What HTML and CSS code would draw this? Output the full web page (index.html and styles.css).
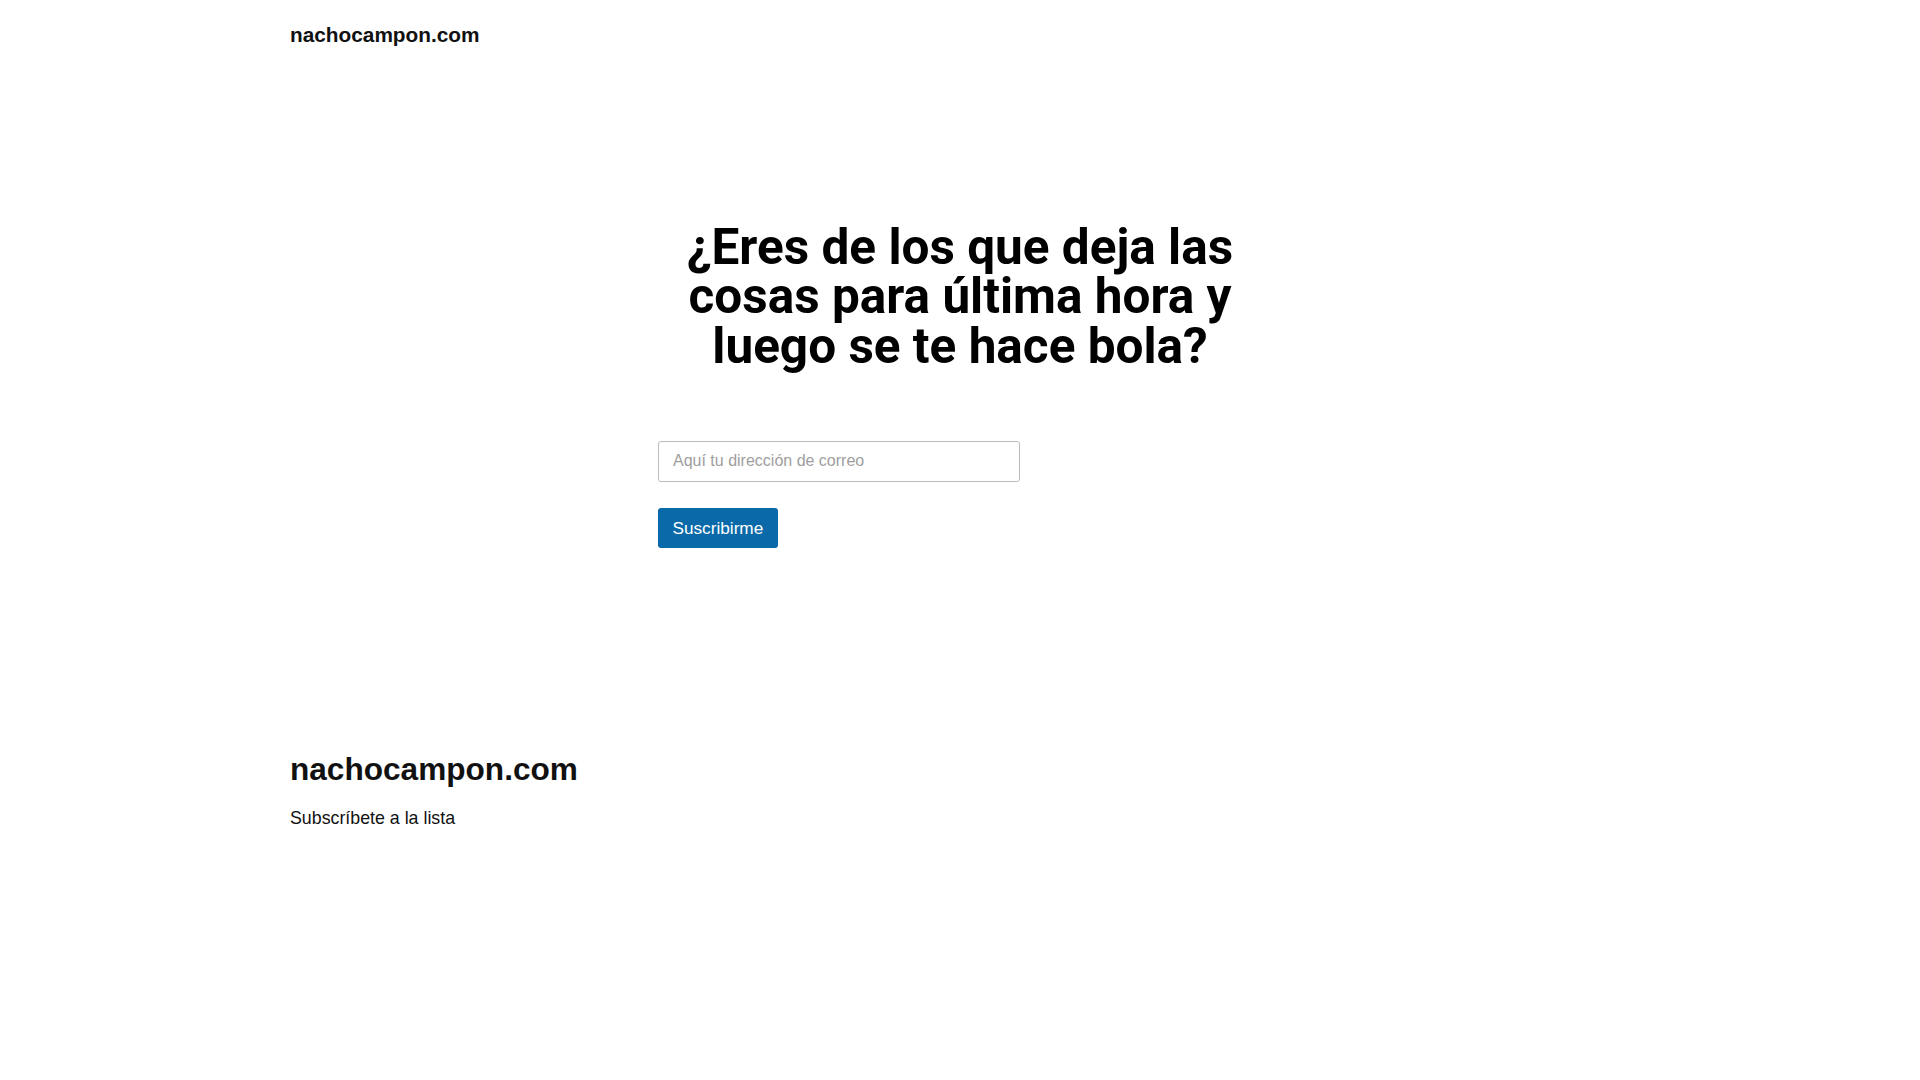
FILE: index.html
```html
<!DOCTYPE html>
<html lang="es">
<head>
<meta charset="utf-8">
<title>nachocampon.com</title>
<link rel="stylesheet" href="styles.css">
</head>
<body>
<header class="site-header">
  <div class="wide">
    <a class="site-title" href="#">nachocampon.com</a>
  </div>
</header>
<main class="site-main">
  <div class="content">
    <h1 class="headline">¿Eres de los que deja las cosas para última hora y luego se te hace bola?</h1>
    <form class="subscribe">
      <input class="email" type="email" placeholder="Aquí tu dirección de correo">
      <button class="submit" type="button">Suscribirme</button>
    </form>
  </div>
</main>
<footer class="site-footer">
  <div class="wide">
    <div class="footer-title">nachocampon.com</div>
    <p class="footer-tagline">Subscríbete a la lista</p>
  </div>
</footer>
</body>
</html>
```

FILE: styles.css
```css
html, body {
  margin: 0;
  padding: 0;
  background: #ffffff;
}

body {
  font-family: "Liberation Sans", Arial, sans-serif;
  color: #111111;
}

.wide {
  width: 1340px;
  margin: 0 auto;
}

.site-header {
  padding-top: 21px;
}

.site-title {
  display: block;
  font-size: 20.8px;
  font-weight: 700;
  line-height: 27px;
  color: #111111;
  text-decoration: none;
}

.site-main {
  padding-top: 174.5px;
}

.content {
  width: 604px;
  margin: 0 auto;
}

.headline {
  margin: 0;
  font-family: Roboto, "Liberation Sans", sans-serif;
  font-weight: 700;
  font-size: 49.5px;
  line-height: 49.5px;
  text-align: center;
  color: #000000;
}

.subscribe {
  margin: 69.5px 0 0;
  display: flex;
  flex-direction: column;
  align-items: flex-start;
  gap: 26px;
}

.email {
  box-sizing: border-box;
  width: 60%;
  height: 41px;
  margin: 0;
  padding: 0 14px;
  border: 1px solid #bcbcbc;
  border-radius: 3px;
  font-family: "Liberation Sans", Arial, sans-serif;
  font-size: 16px;
  color: #222222;
  background: #ffffff;
  outline: none;
}

.email::placeholder {
  color: #9e9e9e;
}

.submit {
  box-sizing: border-box;
  height: 40px;
  margin: 0;
  padding: 0 14.5px;
  border: none;
  border-radius: 3px;
  background: #0a6aa9;
  color: #ffffff;
  font-family: "Liberation Sans", Arial, sans-serif;
  font-size: 17.2px;
  line-height: 40px;
  cursor: pointer;
}

.site-footer {
  padding-top: 202px;
  padding-bottom: 60px;
}

.footer-title {
  font-size: 31.6px;
  font-weight: 700;
  line-height: 38px;
  color: #111111;
}

.footer-tagline {
  margin: 17px 0 0;
  font-size: 17.8px;
  line-height: 26px;
  color: #111111;
}
```
